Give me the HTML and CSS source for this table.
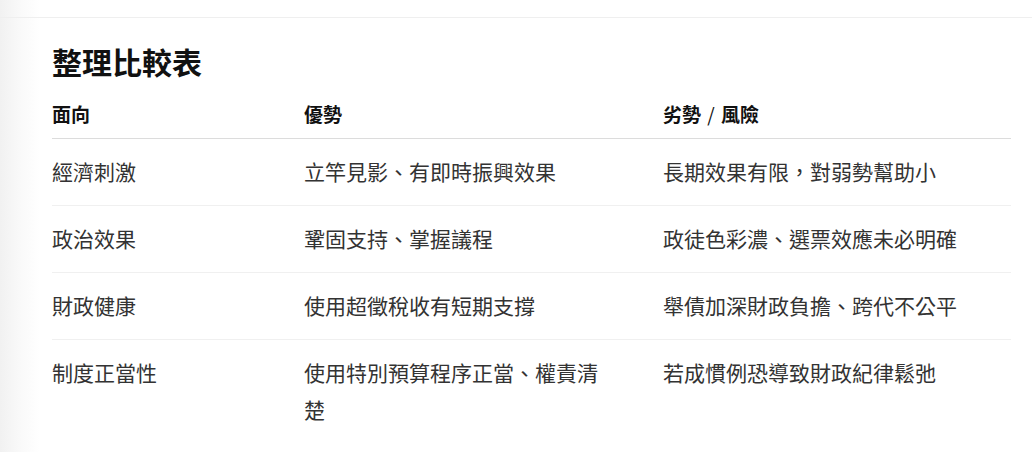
FILE: index.html
```html
<!DOCTYPE html>
<html lang="zh-Hant">
<head>
<meta charset="utf-8">
<title>整理比較表</title>
<link rel="stylesheet" href="styles.css">
</head>
<body>
<div class="topbar"></div>
<main class="content">
  <h2 class="title">整理比較表</h2>
  <table class="compare">
    <colgroup>
      <col class="c1">
      <col class="c2">
      <col class="c3">
    </colgroup>
    <thead>
      <tr><th>面向</th><th>優勢</th><th>劣勢 <span class="slash">/</span> 風險</th></tr>
    </thead>
    <tbody>
      <tr><td>經濟刺激</td><td>立竿見影、有即時振興效果</td><td>長期效果有限，對弱勢幫助小</td></tr>
      <tr><td>政治效果</td><td>鞏固支持、掌握議程</td><td>政徒色彩濃、選票效應未必明確</td></tr>
      <tr><td>財政健康</td><td>使用超徵稅收有短期支撐</td><td>舉債加深財政負擔、跨代不公平</td></tr>
      <tr><td>制度正當性</td><td>使用特別預算程序正當、權責清楚</td><td>若成慣例恐導致財政紀律鬆弛</td></tr>
    </tbody>
  </table>
</main>
</body>
</html>
```

FILE: styles.css
```css
html, body {
  margin: 0;
  padding: 0;
}
body {
  background: linear-gradient(to right, #f1f1f1 0px, #fafafa 22px, #ffffff 40px);
  font-family: "Noto Sans CJK TC", "Noto Sans", sans-serif;
  color: #333;
  min-height: 452px;
}
.topbar {
  height: 17px;
  border-bottom: 1px solid #efefef;
}
.content {
  padding: 23px 21px 0 52px;
}
.title {
  margin: 0 0 19px;
  font-size: 30px;
  line-height: 40px;
  font-weight: 700;
  color: #111;
}
.compare {
  width: 100%;
  border-collapse: collapse;
  table-layout: fixed;
}
.c1 { width: 252px; }
.c2 { width: 359px; }
.compare th {
  text-align: left;
  font-size: 19px;
  line-height: 28px;
  font-weight: 700;
  color: #111;
  padding: 0 48px 10px 0;
  border-bottom: 1px solid #dcdcdc;
}
.slash {
  font-weight: 400;
  margin: 0 2px;
}
.compare td {
  font-size: 21px;
  line-height: 37px;
  font-weight: 400;
  color: #333;
  padding: 14px 48px 15px 0;
  vertical-align: top;
  border-bottom: 1px solid #f0f0f0;
}
.compare tbody tr:last-child td {
  border-bottom: none;
}
```
